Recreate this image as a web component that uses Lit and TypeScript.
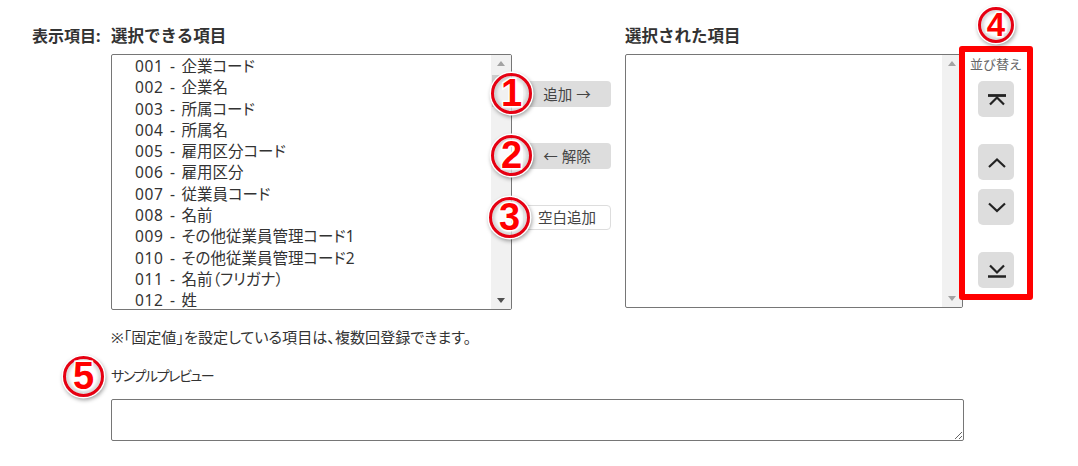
import { LitElement, html, css, svg } from "lit";
import { customElement } from "lit/decorators.js";

const ITEMS = [
  ["001", "企業コード"], ["002", "企業名"], ["003", "所属コード"], ["004", "所属名"],
  ["005", "雇用区分コード"], ["006", "雇用区分"], ["007", "従業員コード"], ["008", "名前"],
  ["009", "その他従業員管理コード1"], ["010", "その他従業員管理コード2"],
  ["011", "名前（フリガナ）"], ["012", "姓"],
];

const icon = (d: unknown) => html`<svg width="24" height="24" viewBox="0 0 24 24" fill="none" stroke="#222" stroke-width="2.2">${d}</svg>`;
const TOP = icon(svg`<path stroke-width="2.8" d="M4 8.5H22"/><path d="M6 17.5L13 10.5L20 17.5"/>`);
const UP = icon(svg`<path d="M5 17L13 9.5L21 17"/>`);
const DOWN = icon(svg`<path d="M5 8.5L13 16L21 8.5"/>`);
const BOTTOM = icon(svg`<path d="M6 7.5L13 14.5L20 7.5"/><path stroke-width="2.5" d="M4 18.5H22"/>`);

@customElement("app-root")
export class AppRoot extends LitElement {
  static styles = css`
    :host {
      display: block;
      position: relative;
      width: 1078px;
      height: 466px;
      overflow: hidden;
      background: #fff;
      color: #333;
      font-family: "Noto Sans", "Noto Sans CJK JP", sans-serif;
    }
    .page { display: flex; flex-direction: column; padding: 25px 0 0 32px; }
    .main { display: flex; align-items: flex-start; }
    .lead { width: 79px; font-size: 16px; font-weight: 700; line-height: 22px; white-space: nowrap; }
    .col-title { font-size: 16.5px; font-weight: 700; line-height: 22px; margin-bottom: 7px; white-space: nowrap; }
    .left { width: 401px; }
    .right { width: 338px; }
    .list {
      box-sizing: border-box;
      border: 1px solid #767676;
      border-radius: 2px;
      display: flex;
      overflow: hidden;
      background: #fff;
    }
    .left .list { height: 256px; }
    .right .list { height: 254px; }
    .options { flex: 1; padding: 1px 0 0 23px; min-width: 0; }
    .option {
      height: 21.3px;
      line-height: 21.3px;
      font-size: 15.5px;
      color: #333;
      white-space: nowrap;
      word-spacing: 2.5px;
      font-feature-settings: "palt";
    }
    .num { letter-spacing: 0.6px; }
    .scroll { width: 20px; background: #f1f1f1; display: flex; flex-direction: column; align-items: center; }
    .arrow-up, .arrow-down { width: 0; height: 0; border-left: 4.5px solid transparent; border-right: 4.5px solid transparent; }
    .arrow-up { border-bottom: 5px solid #a3a3a3; margin-top: 6px; }
    .arrow-down { border-top: 5px solid #505050; margin-bottom: 6px; }
    .right .arrow-down { border-top-color: #a3a3a3; }
    .track { flex: 1; padding: 9px 1px 0; }
    .thumb { width: 18px; height: 32px; background: #cdcdcd; }
    .mid {
      width: 113px;
      box-sizing: border-box;
      display: flex;
      flex-direction: column;
      align-items: flex-end;
      margin-top: 56px;
      padding-right: 14px;
    }
    .act {
      box-sizing: border-box;
      width: 88px;
      height: 26px;
      border-radius: 4px;
      background: #ddd;
      color: #444;
      font-size: 14.5px;
      line-height: 26px;
      text-align: center;
      white-space: nowrap;
    }
    .act + .act { margin-top: 36px; }
    .act.plain { background: #fff; border: 1px solid #ddd; line-height: 23px; height: 25px; }
    .sort {
      box-sizing: border-box;
      width: 74px;
      height: 254px;
      margin: 21px 0 0 -4px;
      border: 6px solid #f00;
      border-radius: 3px;
      display: flex;
      flex-direction: column;
      align-items: center;
    }
    .sort-title { font-size: 13px; line-height: 24px; height: 29px; color: #666; white-space: nowrap; }
    .sbtn { width: 36px; height: 36px; border-radius: 5px; background: #ddd; display: flex; align-items: center; justify-content: center; }
    .gap-s { margin-top: 9px; }
    .gap-l { margin-top: 27px; }
    .below { padding-left: 79px; }
    .note { font-size: 15.1px; line-height: 20px; margin-top: 17px; color: #333; font-feature-settings: "palt"; }
    .preview-label { font-size: 14px; letter-spacing: -1.4px; line-height: 20px; margin-top: 19px; color: #333; font-feature-settings: "palt"; }
    textarea {
      display: block;
      box-sizing: border-box;
      width: 853px;
      height: 42px;
      margin: 13px 0 0;
      border: 1px solid #767676;
      border-radius: 2px;
      padding: 2px;
      background: #fff;
      outline: none;
    }
    .badge {
      position: absolute;
      box-sizing: border-box;
      width: 41px;
      height: 41px;
      border-radius: 50%;
      border: 3px solid #e60012;
      background: rgba(255,255,255,.72);
      box-shadow: 0 0 0 1.5px #fff, 1px 2px 4px 1px rgba(0,0,0,.4), inset 0 0 3px 3px rgba(120,120,120,.28);
      color: #f00;
      font-family: "Liberation Sans", sans-serif;
      font-weight: 700;
      font-size: 38px;
      line-height: 35px;
      text-align: center;
      -webkit-text-stroke: 3px #fff;
      paint-order: stroke fill;
    }
    .b4 { width: 36px; height: 36px; font-size: 33px; line-height: 30px; }
  `;

  render() {
    return html`
      <div class="page">
        <div class="main">
          <div class="lead">表示項目:</div>
          <div class="left">
            <div class="col-title">選択できる項目</div>
            <div class="list">
              <div class="options">${ITEMS.map(([n, t]) => html`<div class="option"><span class="num">${n}</span> - ${t}</div>`)}</div>
              <div class="scroll">
                <div class="arrow-up"></div>
                <div class="track"><div class="thumb"></div></div>
                <div class="arrow-down"></div>
              </div>
            </div>
          </div>
          <div class="mid">
            <div class="act">追加 →</div>
            <div class="act">← 解除</div>
            <div class="act plain">空白追加</div>
          </div>
          <div class="right">
            <div class="col-title">選択された項目</div>
            <div class="list">
              <div class="options"></div>
              <div class="scroll">
                <div class="arrow-up"></div>
                <div class="track"></div>
                <div class="arrow-down"></div>
              </div>
            </div>
          </div>
          <div class="sort">
            <div class="sort-title">並び替え</div>
            <div class="sbtn">${TOP}</div>
            <div class="sbtn gap-l">${UP}</div>
            <div class="sbtn gap-s">${DOWN}</div>
            <div class="sbtn gap-l">${BOTTOM}</div>
          </div>
        </div>
        <div class="below">
          <div class="note">※「固定値」を設定している項目は、複数回登録できます。</div>
          <div class="preview-label">サンプルプレビュー</div>
          <textarea readonly></textarea>
        </div>
      </div>
      <div class="badge" style="left:491px;top:73px">1</div>
      <div class="badge" style="left:491px;top:135px">2</div>
      <div class="badge" style="left:489px;top:197px">3</div>
      <div class="badge b4" style="left:978px;top:7px">4</div>
      <div class="badge" style="left:63px;top:356px">5</div>
    `;
  }
}
